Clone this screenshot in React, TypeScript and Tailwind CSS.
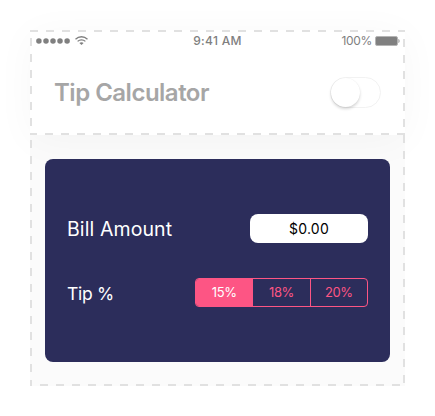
import { useState } from "react";

const RATES = ["15%", "18%", "20%"];

function HeaderOutline() {
  return (
    <svg className="pointer-events-none absolute inset-0" width="375" height="105" fill="none" stroke="#e1e1e1" strokeWidth="2" strokeDasharray="8 8">
      <path d="M0 1H375" />
      <path d="M-1 104H375" />
      <path d="M1 8V105" />
      <path d="M374 9V105" />
    </svg>
  );
}

function BodyOutline() {
  return (
    <svg className="pointer-events-none absolute inset-0" width="375" height="251" fill="none" stroke="#e1e1e1" strokeWidth="2" strokeDasharray="8 8">
      <path d="M10 250H375" />
      <path d="M1 5V251" />
      <path d="M374 0V251" />
    </svg>
  );
}

function StatusBar() {
  return (
    <div className="grid h-5 grid-cols-3 items-center pl-[6px] pr-[5px] text-[12px] leading-5 text-[#808080]">
      <div className="flex items-center gap-[5px]">
        <svg width="34" height="6" viewBox="0 0 34 6" fill="#808080">
          {[2.9, 10, 17, 24, 31.1].map((x) => (
            <circle key={x} cx={x} cy="3" r="2.75" />
          ))}
        </svg>
        <svg width="13" height="9" viewBox="0 0 13 9" fill="none" stroke="#808080" strokeWidth="1.3">
          <path d="M.5 3.2C4 -.1 9 -.1 12.5 3.2" />
          <path d="M2.6 5.4C4.8 3.3 8.2 3.3 10.4 5.4" />
          <path d="M4.4 7.1C5.6 6 7.4 6 8.6 7.1L6.5 9Z" fill="#808080" stroke="none" />
        </svg>
      </div>
      <div className="pt-px pr-px text-center font-medium tracking-[0.3px] whitespace-nowrap">9:41 AM</div>
      <div className="flex items-center justify-end gap-[3px]">
        <span className="pt-px tracking-[-0.35px]">100%</span>
        <svg width="25" height="10" viewBox="0 0 25 10">
          <rect x="0.5" y="0.5" width="22" height="9" rx="1.5" fill="#808080" stroke="#b5b5b5" />
          <path d="M23.5 3C24.8 3.4 24.8 6.6 23.5 7Z" fill="#808080" />
        </svg>
      </div>
    </div>
  );
}

export default function App() {
  const [rate, setRate] = useState("15%");
  const [on, setOn] = useState(false);

  return (
    <div className="h-[416px] w-[435px] overflow-hidden bg-white p-[30px] font-['Inter',sans-serif]">
      <div className="isolate h-[356px] w-[375px] bg-[#fbfbfb]">
        <header className="relative h-[105px] bg-white shadow-[0_5px_40px_rgba(0,0,0,0.035)]">
          <StatusBar />
          <div className="flex h-[85px] items-center justify-between pr-[24px] pl-[24px]">
            <h1 className="text-[24px] leading-[30px] font-semibold tracking-[-0.5px] text-[#a6a6a6]">Tip Calculator</h1>
            <button
              role="switch"
              aria-checked={on}
              aria-label="Dark theme"
              onClick={() => setOn(!on)}
              className={`flex h-[31px] w-[51px] rounded-full border-[1.5px] border-[#f2f2f2] ${on ? "justify-end" : "justify-start"}`}
            >
              <span className="h-[29px] w-[29px] rounded-full bg-white shadow-[0_2px_3px_rgba(0,0,0,0.16),0_0_1px_rgba(0,0,0,0.08)]" />
            </button>
          </div>
          <HeaderOutline />
        </header>
        <main className="relative h-[251px] px-[15px] pt-6">
          <section className="flex h-[203px] flex-col gap-[35px] rounded-[8px] bg-[#2c2d5b] pt-[55px] pr-[22px] pl-[22px] text-white">
            <div className="flex h-[29px] items-center justify-between">
              <label className="pt-px text-[19.5px] leading-[29px] tracking-[0.1px]">Bill Amount</label>
              <div className="h-[29px] w-[118px] rounded-[8px] bg-white text-center text-[14px] leading-[30px] tracking-[0.25px] text-black">$0.00</div>
            </div>
            <div className="flex h-[29px] items-center justify-between">
              <label className="pt-px text-[17.5px] leading-[29px] tracking-[-0.3px]">Tip %</label>
              <div className="flex h-[29px] w-[173px] divide-x divide-[#fd5584] overflow-hidden rounded-[4px] border border-[#fd5584]">
                {RATES.map((r) => (
                  <button
                    key={r}
                    onClick={() => setRate(r)}
                    className={`flex-1 text-[13px] leading-[27px] tracking-[-0.4px] ${r === rate ? "bg-[#fd5584] text-white" : "text-[#fd5584]"}`}
                  >
                    {r}
                  </button>
                ))}
              </div>
            </div>
          </section>
          <BodyOutline />
        </main>
      </div>
    </div>
  );
}
